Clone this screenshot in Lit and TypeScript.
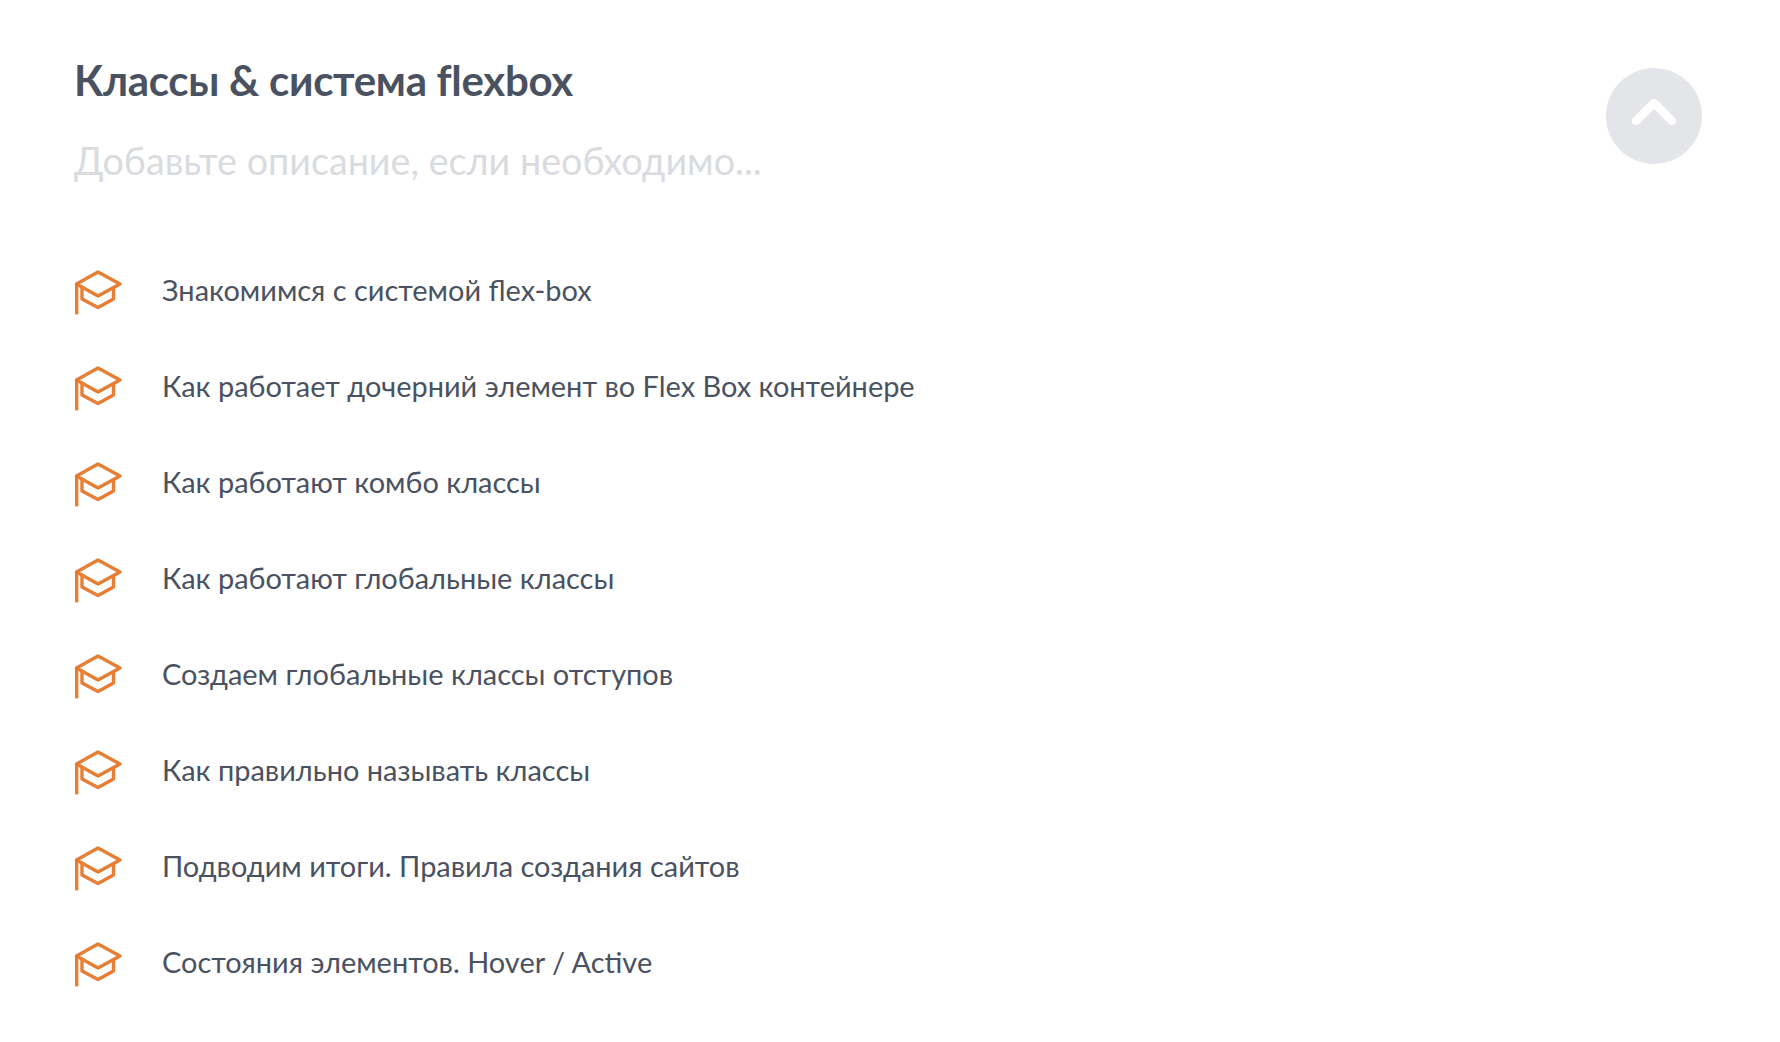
import { css, html, LitElement } from 'lit';
import { customElement } from 'lit/decorators.js';

const LESSONS = [
  'Знакомимся с системой flex-box',
  'Как работает дочерний элемент во Flex Box контейнере',
  'Как работают комбо классы',
  'Как работают глобальные классы',
  'Создаем глобальные классы отступов',
  'Как правильно называть классы',
  'Подводим итоги. Правила создания сайтов',
  'Состояния элементов. Hover / Active',
];

const capIcon = html`
  <svg class="cap" viewBox="0 0 48 48" fill="none" stroke="#e67e33" stroke-width="3.4" stroke-linejoin="round" stroke-linecap="round">
    <path d="M2.5 16 L24 4 L46 16 L24 28 Z" />
    <path d="M2.7 16 V45" />
    <path d="M8 20 V31 L24 39.5 L39.5 31 V20" />
  </svg>
`;

@customElement('app-root')
class AppRoot extends LitElement {
  static styles = css`
    :host {
      display: block;
      min-height: 1042px;
      background: #fff;
      font-family: 'Lato', 'Open Sans', sans-serif;
      color: #4a5261;
    }

    .page {
      display: flex;
      justify-content: space-between;
      align-items: flex-start;
      padding: 55px 78px 0 74px;
    }

    h1 {
      margin: 0;
      font-size: 42px;
      line-height: 50px;
      font-weight: 700;
      letter-spacing: -0.3px;
    }

    .desc {
      margin-top: 33px;
      font-size: 37.7px;
      line-height: 46px;
      color: #d9dbdf;
      font-weight: 400;
    }

    ul {
      list-style: none;
      margin: 81px 0 0;
      padding: 0;
      display: flex;
      flex-direction: column;
      gap: 48px;
    }

    li {
      display: flex;
      align-items: center;
      gap: 40px;
      height: 48px;
      font-size: 28.95px;
    }

    .cap {
      width: 48px;
      height: 48px;
      flex: none;
      align-self: flex-start;
      margin-top: 3px;
    }

    .up {
      width: 96px;
      height: 96px;
      margin-top: 13px;
      border-radius: 50%;
      background: #e4e5e9;
      display: flex;
      align-items: center;
      justify-content: center;
      flex: none;
    }

    .up svg {
      width: 48px;
      height: 32px;
      overflow: visible;
    }
  `;

  render() {
    return html`
      <div class="page">
        <div>
          <h1>Классы &amp; система flexbox</h1>
          <div class="desc">Добавьте описание, если необходимо...</div>
          <ul>
            ${LESSONS.map((t) => html`<li>${capIcon}<span>${t}</span></li>`)}
          </ul>
        </div>
        <div class="up">
          <svg viewBox="0 0 48 32" fill="none" stroke="#fff" stroke-width="8.5" stroke-linecap="round" stroke-linejoin="round">
            <path d="M6 21 L24 3 L42 21" />
          </svg>
        </div>
      </div>
    `;
  }
}
